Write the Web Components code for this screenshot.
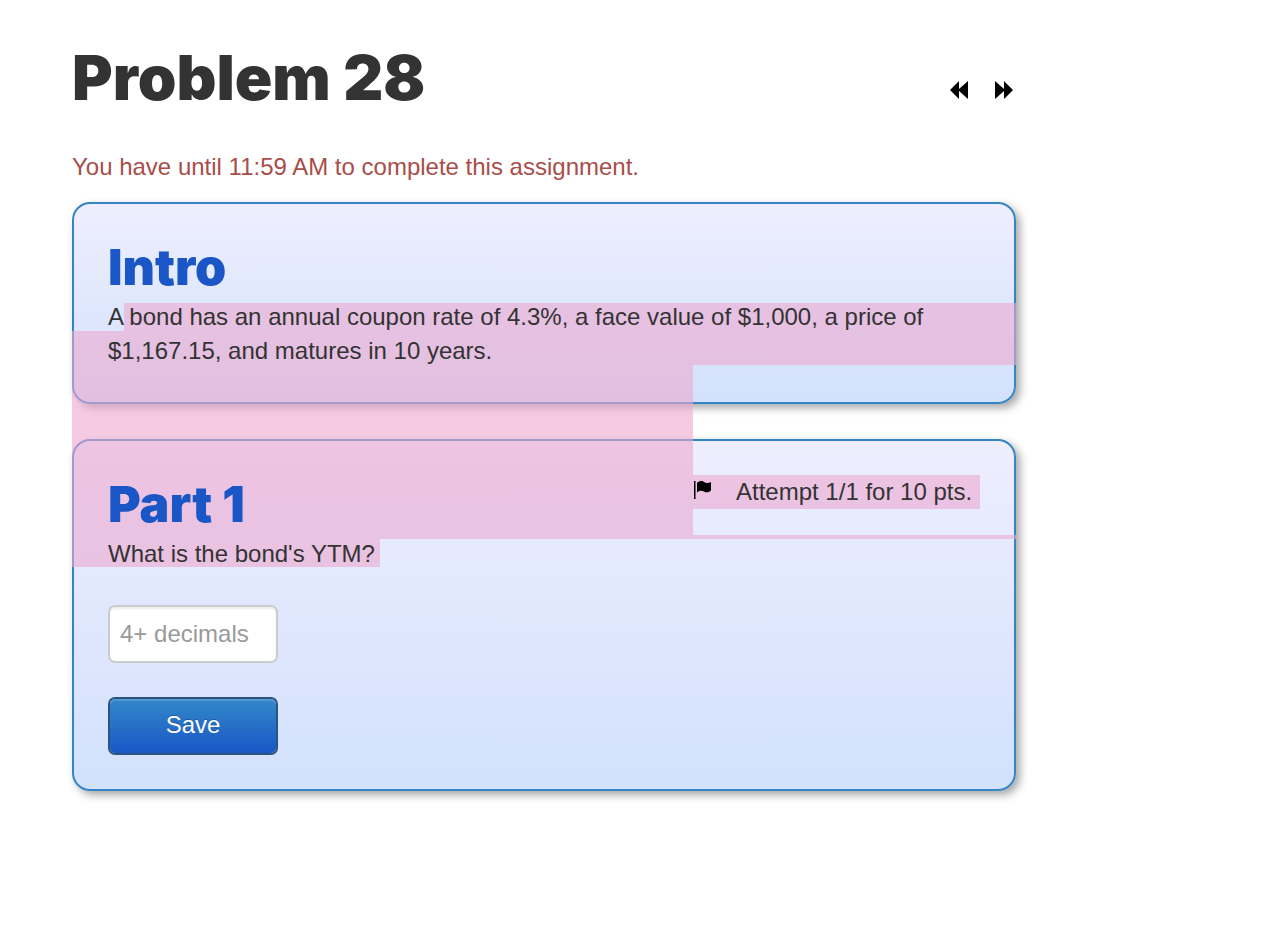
<!DOCTYPE html>
<html lang="en">
<head>
<meta charset="utf-8">
<title>Problem 28</title>
<style>
body{margin:0;background:#fff;color:#333;font:24px/34px "Liberation Sans",Arial,sans-serif}
p{margin:0}
</style>
</head>
<body>
<problem-page>
  <problem-header slot="header" heading="Problem 28"></problem-header>
  <deadline-note slot="note">You have until 11:59 AM to complete this assignment.</deadline-note>
  <problem-card heading="Intro"><p>A bond has an annual coupon rate of 4.3%, a face value of $1,000, a price of $1,167.15, and matures in 10 years.</p></problem-card>
  <problem-card heading="Part 1">
    <attempt-status slot="status">Attempt 1/1 for 10 pts.</attempt-status>
    <p>What is the bond's YTM?</p>
    <answer-form></answer-form>
  </problem-card>
  <selection-layer slot="overlay"></selection-layer>
</problem-page>
<script>
const define = (name, html, setup) => customElements.define(name, class extends HTMLElement {
  constructor() {
    super();
    const t = document.createElement('template');
    t.innerHTML = html;
    this.attachShadow({mode: 'open'}).append(t.content.cloneNode(true));
  }
  connectedCallback() { if (setup) setup(this); }
});
const setHeading = el => { el.shadowRoot.querySelector('h1,h2').textContent = el.getAttribute('heading'); };

define('problem-page', `
<style>
:host{display:block;padding:40px 250px 40px 72px}
main{position:relative;display:flow-root}
.cards{display:flex;flex-direction:column;gap:35px;margin-top:18px}
</style>
<main><slot name="header"></slot><slot name="note"></slot><div class="cards"><slot></slot></div><slot name="overlay"></slot></main>`);

define('problem-header', `
<style>
:host{display:flex;justify-content:space-between;align-items:center;height:76px;margin-bottom:34px}
h1{margin:0;font:900 62px/74px Inter,"Liberation Sans",sans-serif;font-variation-settings:"opsz" 14;color:#333}
nav{display:flex;gap:25px;padding:24px 2px 0 0}
a{display:block;color:#000}
svg{display:block}
</style>
<h1></h1>
<nav aria-label="Problems">
<a href="#previous" aria-label="Previous problem"><svg width="20" height="20" viewBox="0 0 20 20"><path fill="currentColor" d="M1 10 10 1V9L19 1V19L10 11V19Z"/></svg></a>
<a href="#next" aria-label="Next problem"><svg width="20" height="20" viewBox="0 0 20 20"><path fill="currentColor" d="M19 10 10 1V9L1 1V19L10 11V19Z"/></svg></a>
</nav>`, setHeading);

define('deadline-note', `
<style>:host{display:block;color:#a94d4a}</style><slot></slot>`);

define('problem-card', `
<style>
:host{display:block;box-sizing:border-box;padding:34px;border:2px solid #3385c6;border-radius:18px;
background:linear-gradient(#eef,#d2e1fc);box-shadow:4px 4px 8px rgba(0,0,0,.35)}
.body{position:relative;z-index:2}
header{display:flex;justify-content:space-between;align-items:flex-start;height:62px}
h2{margin:0;font:900 50px/58px Inter,"Liberation Sans",sans-serif;font-variation-settings:"opsz" 14;color:#1a56c6}
</style>
<div class="body"><header><h2></h2><slot name="status"></slot></header><slot></slot></div>`, setHeading);

define('attempt-status', `
<style>
:host{display:flex;gap:24px;align-items:center;min-width:287px}
svg{display:block;margin:0 0 4px 1px}
</style>
<svg width="18" height="20" viewBox="0 0 18 20" aria-hidden="true"><path d="M0 1H1.500V19H0ZM3 3C6 0 9 1 11 2.500C13 3.500 15 3 17 2V10.500C15 12.500 12 13 10 11.500C7 10 5 10.500 3 12.500Z"/></svg>
<span><slot></slot></span>`);

define('answer-form', `
<style>
:host{display:block;margin-top:34px}
form{display:flex;flex-direction:column;gap:34px;width:170px}
input,button{box-sizing:border-box;width:100%;height:58px;margin:0;border-radius:7px;font:inherit}
input{padding:0 10px;border:2px solid #ccc;background:#fff;color:#555;box-shadow:inset 0 2px 2px rgba(0,0,0,.08)}
input::placeholder{color:#999;opacity:1}
button{padding:0 0 2px;border:2px solid #2a5580;background:linear-gradient(#3388c8,#1a56c8) padding-box;color:#fff;
text-shadow:0 -1px 0 rgba(0,0,0,.25);box-shadow:inset 0 2px 0 rgba(255,255,255,.15)}
</style>
<form><input type="text" aria-label="Answer" placeholder="4+ decimals"><button type="button">Save</button></form>`);

/* Text selection: painted above the card surfaces and below their text. */
define('selection-layer', `
<style>
:host{position:absolute;inset:0;z-index:1;pointer-events:none}
i{position:absolute;background:rgba(237,168,207,.6)}
.a{top:263px;height:28px;left:52px;right:0}
.b{top:291px;height:34px;left:0;right:0}
.c{top:325px;height:174px;left:0;right:323px}
.d{top:435px;height:34px;width:287px;right:36px}
.e{top:495px;height:4px;width:323px;right:0}
.f{top:499px;height:28px;left:0;width:308px}
</style>
<i class="a"></i><i class="b"></i><i class="c"></i><i class="d"></i><i class="e"></i><i class="f"></i>`);
</script>
</body>
</html>
